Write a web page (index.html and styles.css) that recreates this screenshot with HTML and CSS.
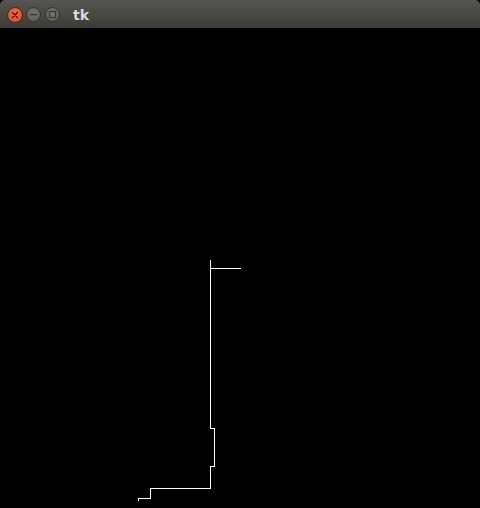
FILE: index.html
```html
<!DOCTYPE html>
<html>
<head>
<meta charset="utf-8">
<link rel="stylesheet" href="styles.css">
</head>
<body>
<div class="window">
  <div class="titlebar">
    <div class="buttons">
      <span class="btn close">
        <svg width="14" height="14" viewBox="0 0 14 14"><path d="M4.5 4.5L9.5 9.5M9.5 4.5L4.5 9.5" stroke="#3a1a10" stroke-width="1.4" stroke-linecap="round"/></svg>
      </span>
      <span class="btn min">
        <svg width="13" height="13" viewBox="0 0 13 13"><path d="M3 6.5H10" stroke="#3a3936" stroke-width="1.4"/></svg>
      </span>
      <span class="btn max">
        <svg width="13" height="13" viewBox="0 0 13 13"><rect x="3.5" y="3.5" width="6" height="6" fill="none" stroke="#3a3936" stroke-width="1.2"/></svg>
      </span>
    </div>
    <span class="title">tk</span>
  </div>
  <svg class="canvas" width="480" height="480" viewBox="0 0 480 480">
    <path d="M241 240.5H210.5M210.5 232V400.5H214.5V438.5H210.5V460.5H150.5V470.5H138.5V473" fill="none" stroke="#ffffff" stroke-width="1" shape-rendering="crispEdges"/>
  </svg>
</div>
</body>
</html>
```

FILE: styles.css
```css
html, body {
  margin: 0;
  padding: 0;
  background: #000;
}
.window {
  width: 480px;
  height: 508px;
  display: flex;
  flex-direction: column;
  background: #000;
  overflow: hidden;
}
.titlebar {
  height: 28px;
  flex: none;
  display: flex;
  align-items: center;
  background: linear-gradient(#57554f, #3c3b37);
  border-radius: 5px 5px 0 0;
  box-sizing: border-box;
  padding-left: 7px;
  padding-top: 1px;
}
.buttons {
  display: flex;
  align-items: center;
  gap: 3px;
}
.btn {
  display: flex;
  align-items: center;
  justify-content: center;
  border-radius: 50%;
  box-sizing: border-box;
}
.close {
  width: 16px;
  height: 16px;
  background: radial-gradient(circle at 50% 40%, #f46a45, #dc4a1f);
  border: 1px solid #3b2a22;
}
.min, .max {
  width: 15px;
  height: 15px;
  background: radial-gradient(circle at 50% 40%, #76746e, #5c5a55);
  border: 1px solid #353430;
}
.max {
  margin-left: 1px;
}
.title {
  margin-left: 13px;
  font-family: "DejaVu Sans", sans-serif;
  font-weight: bold;
  font-size: 14px;
  color: #dfdbd2;
}
.canvas {
  display: block;
  flex: none;
}
```
